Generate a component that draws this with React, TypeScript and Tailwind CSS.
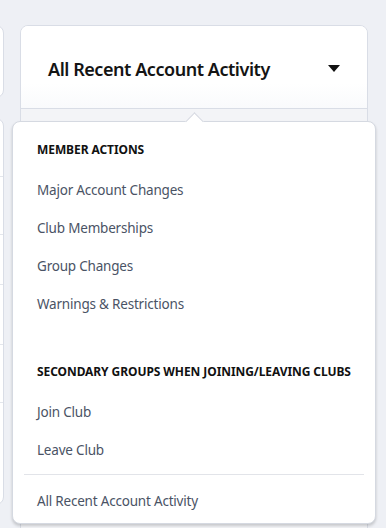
import React from 'react';

const memberActions = [
  'Major Account Changes',
  'Club Memberships',
  'Group Changes',
  'Warnings & Restrictions',
];

const clubActions = ['Join Club', 'Leave Club'];

function MenuHeader({ children }: { children: React.ReactNode }) {
  return (
    <div className="h-5 flex items-center px-[24px] whitespace-nowrap text-[12px] font-bold uppercase text-[#111] tracking-[-0.08px]">
      {children}
    </div>
  );
}

function MenuItem({ label }: { label: string }) {
  return (
    <div className="h-[38px] flex items-center px-[24px] text-[13.5px] text-[#4a5365] tracking-[-0.2px] hover:bg-gray-50">
      {label}
    </div>
  );
}

export default function App() {
  return (
    <div
      className="min-h-[528px] h-[528px] bg-[#eef0f5] flex gap-4 pt-[25px] overflow-hidden"
      style={{ fontFamily: '"Noto Sans", "Open Sans", sans-serif' }}
    >
      {/* side column, mostly off screen */}
      <div className="w-[104px] ml-[-100px] shrink-0 flex flex-col gap-5">
        <div className="h-[73px] bg-white rounded-lg border border-[#d9dde6]" />
        <div className="h-[387px] bg-white rounded-lg border border-[#d9dde6] flex flex-col">
          <div className="h-[58px] border-b border-[#e3e6ec]" />
          <div className="h-[58px] border-b border-[#e3e6ec]" />
          <div className="h-[50px] border-b border-[#e3e6ec]" />
          <div className="h-[60px] border-b border-[#e3e6ec]" />
          <div className="h-[58px] border-b border-[#e3e6ec]" />
        </div>
      </div>

      {/* activity card */}
      <div className="relative w-[348px] shrink-0">
        <div className="rounded-t-lg border border-[#d9dde6] bg-white overflow-hidden">
          <div className="h-[83px] pt-1 flex items-center justify-between pl-[27px] pr-[27px] bg-gradient-to-b from-white from-70% to-[#f9fafc] border-b border-[#d9dde6]">
            <span className="text-[18px] font-semibold text-[#141414] tracking-[-0.45px]">
              All Recent Account Activity
            </span>
            <svg width="12" height="7" viewBox="0 0 12 7" className="mb-[1px]">
              <path d="M0 0h12L6 7z" fill="#111" />
            </svg>
          </div>
          <div className="h-[430px] bg-[#f3f4f7]" />
        </div>

        {/* dropdown */}
        <div className="absolute left-[-8px] top-[96px] w-[364px] h-[403px] bg-white rounded-lg border border-[#d5d9e1] shadow-[0_2px_3px_rgba(0,0,0,0.18)] pt-[18px] flex flex-col">
          <div className="absolute left-[175px] top-[-7px] w-[13px] h-[13px] bg-white border-l border-t border-[#d5d9e1] rotate-45" />
          <MenuHeader>Member actions</MenuHeader>
          <div className="mt-[11px] flex flex-col">
            {memberActions.map((a) => (
              <MenuItem key={a} label={a} />
            ))}
          </div>
          <div className="mt-[39px]">
            <MenuHeader>Secondary groups when joining/leaving clubs</MenuHeader>
          </div>
          <div className="mt-[11px] flex flex-col">
            {clubActions.map((a) => (
              <MenuItem key={a} label={a} />
            ))}
          </div>
          <div className="mx-[11px] mt-[5px] border-t border-[#e2e4e9]" />
          <div className="mt-[7px]">
            <MenuItem label="All Recent Account Activity" />
          </div>
        </div>
      </div>
    </div>
  );
}
